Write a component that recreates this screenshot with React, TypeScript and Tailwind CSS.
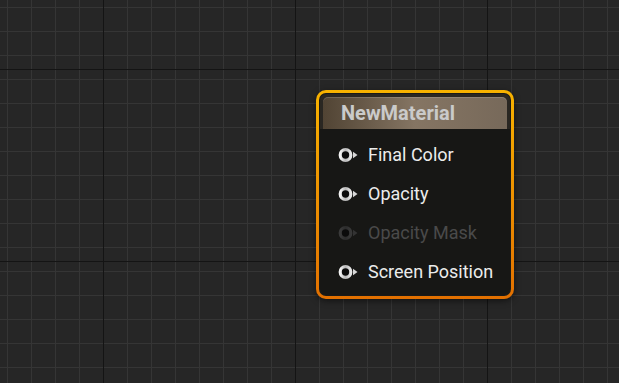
import React from "react";

function Pin({ dim = false }: { dim?: boolean }) {
  return (
    <svg width="22" height="16" viewBox="0 0 22 16" className="shrink-0">
      <defs>
        <linearGradient id={dim ? "pd" : "pw"} x1="0" y1="0" x2="1" y2="0">
          <stop offset="0" stopColor={dim ? "#3a3a3a" : "#f4f4f4"} />
          <stop offset="0.5" stopColor={dim ? "#2c2c2c" : "#b8b8b8"} />
          <stop offset="1" stopColor={dim ? "#383838" : "#e8e8e8"} />
        </linearGradient>
      </defs>
      <circle cx="7.5" cy="8" r="5.3" fill="#0b0b0b" stroke={`url(#${dim ? "pd" : "pw"})`} strokeWidth="3.2" />
      <polygon points="15,4.8 19.5,8 15,11.2" fill={dim ? "#333333" : "#d8d8d8"} />
    </svg>
  );
}

function Row({ label, dim = false }: { label: string; dim?: boolean }) {
  return (
    <div className="flex h-[39px] items-center pl-[18px]">
      <Pin dim={dim} />
      <span
        className={`ml-[8px] text-[18px] leading-none ${dim ? "text-[#4a4a4a]" : "text-[#ececec]"}`}
        style={{ fontFamily: "Roboto, 'Liberation Sans', sans-serif" }}
      >
        {label}
      </span>
    </div>
  );
}

export default function App() {
  return (
    <div className="relative h-[383px] w-[619px] overflow-hidden bg-[#262626]">
      <svg className="absolute inset-0" width="619" height="383">
        <defs>
          <pattern id="minor" x="7" y="7" width="24" height="24" patternUnits="userSpaceOnUse">
            <rect x="0" y="0" width="1" height="24" fill="#353535" />
            <rect x="0" y="0" width="24" height="1" fill="#353535" />
          </pattern>
          <pattern id="major" x="103" y="69" width="192" height="192" patternUnits="userSpaceOnUse">
            <rect x="0" y="0" width="1" height="192" fill="#141414" />
            <rect x="0" y="0" width="192" height="1" fill="#141414" />
          </pattern>
        </defs>
        <rect width="619" height="383" fill="url(#minor)" />
        <rect width="619" height="383" fill="url(#major)" />
      </svg>

      <div className="absolute left-[316px] top-[90px] h-[209px] w-[198px] rounded-[10px] bg-gradient-to-b from-[#f7b200] to-[#e27000] p-[3px] shadow-[0_2px_6px_rgba(0,0,0,0.5)]">
        <div className="h-full w-full rounded-[7px] bg-[#1a1a18] p-[1px]">
          <div className="flex h-full w-full flex-col rounded-[6px] bg-[#2a2722] p-[3px]">
            <div className="flex h-[32px] items-center rounded-t-[5px] bg-gradient-to-r from-[#514434] via-[#857563] to-[#77695a] pl-[18px] shadow-[inset_0_1px_0_rgba(255,255,255,0.15)]">
              <span
                className="text-[20px] font-bold leading-none text-[#cacaca]"
                style={{ fontFamily: "Roboto, 'Liberation Sans', sans-serif" }}
              >
                NewMaterial
              </span>
            </div>
            <div className="-mx-[3px] -mb-[3px] flex flex-1 flex-col rounded-b-[6px] bg-[#171715] pt-[6px]">
              <Row label="Final Color" />
              <Row label="Opacity" />
              <Row label="Opacity Mask" dim />
              <Row label="Screen Position" />
            </div>
          </div>
        </div>
      </div>
    </div>
  );
}
